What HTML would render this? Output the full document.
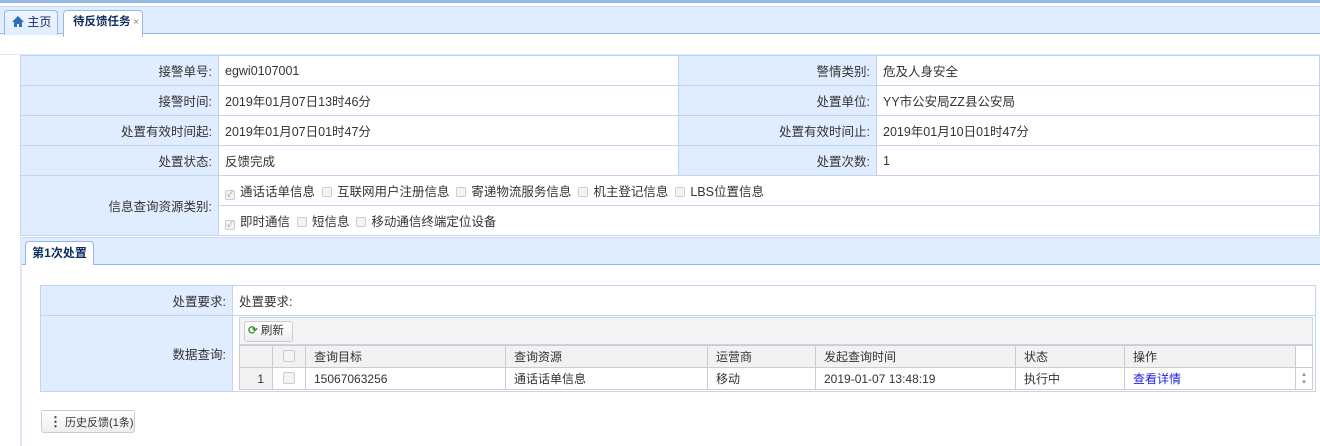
<!DOCTYPE html>
<html><head><meta charset="utf-8"><style>
*{box-sizing:border-box;margin:0;padding:0}
body{width:1320px;height:446px;overflow:hidden;background:#fff;font-family:"Liberation Sans","Noto Sans CJK SC",sans-serif;font-size:12px;color:#333;position:relative}
.abs{position:absolute;white-space:nowrap}
.topline{left:0;top:0;width:1320px;height:3px;background:#95b8e7}
.tabbar{left:0;top:6px;width:1320px;height:28px;background:#e0ecff;border-top:1px solid #c5d9f3;border-bottom:1px solid #95b8e7}
.tab{position:absolute;top:3px;height:25px;border:1px solid #95b8e7;border-bottom:none;border-radius:4px 4px 0 0;background:linear-gradient(#eff5ff,#e0ecff);line-height:23px;padding:0 0 0 8px;color:#0e2d5f;white-space:nowrap;font-size:12px;overflow:hidden}
table{border-collapse:collapse;position:absolute}
td{border:1px solid #c1d6ee;height:30px;padding:0 6px;font-size:12.5px;white-space:nowrap}
td.l{background:#e0ecff;text-align:right}
.cb{display:inline-block;width:10px;height:10px;border:1px solid #ccc;background:#f4f4f4;border-radius:2px;margin:0 5px 0 0;vertical-align:-1px;font-size:8px;line-height:8px;text-align:center;color:#999}
.g td{height:22px;border:1px solid #ccc;font-size:12px}
</style></head><body>
<div class="abs topline"></div>
<div class="abs tabbar">
 <div class="tab" style="left:4px;width:54px;padding-left:7px"><svg width="12" height="11" viewBox="0 0 12 11" style="vertical-align:-1px"><path d="M6 0L0 6h2v5h3V8h2v3h3V6h2z" fill="#2a6fc2"/></svg> 主页</div>
 <div class="tab" style="left:63px;width:80px;background:#fff;height:27px;font-weight:bold;padding-left:9px;font-size:11.5px">待反馈任务<span style="color:#888;font-weight:normal;font-size:10px"> ×</span></div>
</div>
<div class="abs" style="left:0;top:54px;width:1320px;height:1px;background:#dde8f5"></div>
<table style="left:20px;top:55px;width:1300px">
<tr><td class="l" style="width:198px">接警单号:</td><td style="width:460px">egwi0107001</td><td class="l" style="width:198px">警情类别:</td><td>危及人身安全</td></tr>
<tr><td class="l">接警时间:</td><td>2019年01月07日13时46分</td><td class="l">处置单位:</td><td>YY市公安局ZZ县公安局</td></tr>
<tr><td class="l">处置有效时间起:</td><td>2019年01月07日01时47分</td><td class="l">处置有效时间止:</td><td>2019年01月10日01时47分</td></tr>
<tr><td class="l">处置状态:</td><td>反馈完成</td><td class="l">处置次数:</td><td>1</td></tr>
<tr><td class="l" rowspan="2">信息查询资源类别:</td><td colspan="3"><span class="cb">✓</span>通话话单信息 &nbsp;<span class="cb"></span>互联网用户注册信息 &nbsp;<span class="cb"></span>寄递物流服务信息 &nbsp;<span class="cb"></span>机主登记信息 &nbsp;<span class="cb"></span>LBS位置信息</td></tr>
<tr><td colspan="3"><span class="cb">✓</span>即时通信 &nbsp;<span class="cb"></span>短信息 &nbsp;<span class="cb"></span>移动通信终端定位设备</td></tr>
</table>
<div class="abs" style="left:20px;top:237px;width:1300px;height:28px;background:#e0ecff;border-top:1px solid #c5d9f3;border-bottom:1px solid #95b8e7"></div>
<div class="abs" style="left:20px;top:237px;width:2px;height:209px;background:#dde8f5"></div>
<div class="abs" style="left:25px;top:241px;width:69px;height:24px;background:#fff;border:1px solid #95b8e7;border-bottom:none;border-radius:4px 4px 0 0;line-height:22px;text-align:center;font-weight:bold;color:#0e2d5f">第1次处置</div>
<table style="left:40px;top:285px;width:1276px">
<tr><td class="l" style="width:192px">处置要求:</td><td>处置要求:</td></tr>
<tr><td class="l" style="height:76px">数据查询:</td><td style="padding:1px 2px 1px 6px;vertical-align:top">
 <div style="border:1px solid #c1d6ee;background:#f4f4f4;height:28px;position:relative">
  <div style="position:absolute;left:4px;top:3px;width:49px;height:21px;border:1px solid #ccc;border-radius:3px;background:linear-gradient(#fff,#eee);line-height:19px;font-size:11.5px;padding-left:3px"><span style="color:#3a9a3a;font-weight:bold">⟳</span> 刷新</div>
 </div>
 <table class="g" style="position:static;width:100%;border-collapse:collapse">
  <tr style="background:#f2f2f2"><td style="width:33px"></td><td style="width:33px;text-align:center"><span class="cb" style="margin:0;width:12px;height:12px"></span></td><td style="width:200px;padding-left:8px">查询目标</td><td style="width:202px;padding-left:8px">查询资源</td><td style="width:108px;padding-left:8px">运营商</td><td style="width:200px;padding-left:8px">发起查询时间</td><td style="width:109px;padding-left:8px">状态</td><td style="width:171px;padding-left:8px">操作</td><td style="background:#fff"></td></tr>
  <tr><td style="text-align:right;padding-right:8px;background:#f2f2f2">1</td><td style="text-align:center"><span class="cb" style="margin:0;width:12px;height:12px"></span></td><td style="padding-left:8px">15067063256</td><td style="padding-left:8px">通话话单信息</td><td style="padding-left:8px">移动</td><td style="padding-left:8px">2019-01-07 13:48:19</td><td style="padding-left:8px">执行中</td><td style="padding-left:8px;color:#2222dd">查看详情</td><td style="font-size:7px;color:#888;text-align:center;line-height:8px">▴<br>▾</td></tr>
 </table>
</td></tr>
</table>
<div class="abs" style="left:41px;top:410px;width:94px;height:23px;border:1px solid #ccc;border-radius:3px;background:linear-gradient(#fff,#eee);line-height:21px;font-size:11px;padding-left:7px;overflow:hidden"><b style="font-size:13px">⋮</b> 历史反馈(1条)</div>
</body></html>
